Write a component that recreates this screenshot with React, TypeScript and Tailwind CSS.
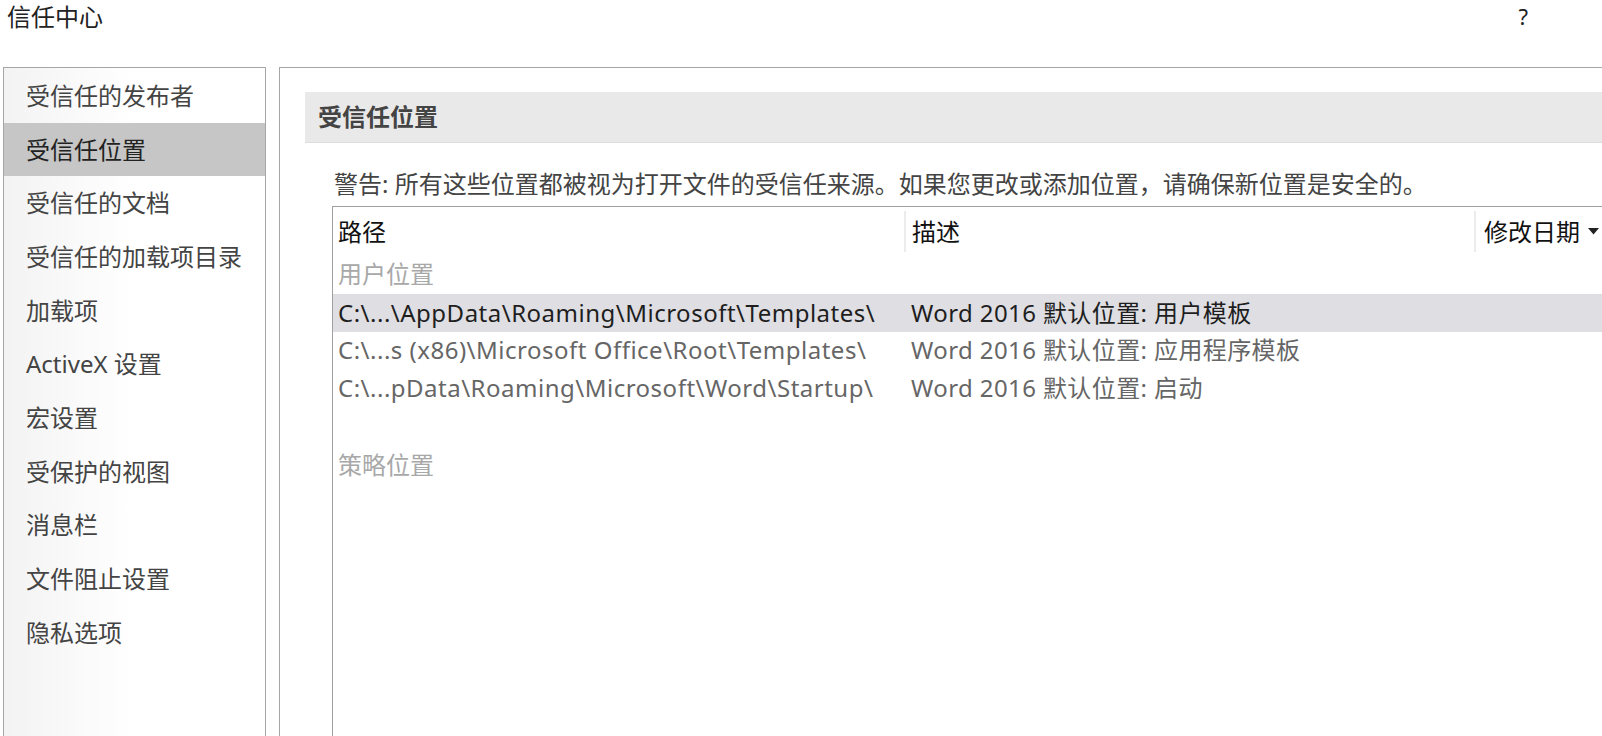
import React from 'react';

const navItems = [
  '受信任的发布者',
  '受信任位置',
  '受信任的文档',
  '受信任的加载项目录',
  '加载项',
  'ActiveX 设置',
  '宏设置',
  '受保护的视图',
  '消息栏',
  '文件阻止设置',
  '隐私选项',
];

const rows = [
  { path: 'C:\\...\\AppData\\Roaming\\Microsoft\\Templates\\', desc: 'Word 2016 默认位置: 用户模板', selected: true },
  { path: 'C:\\...s (x86)\\Microsoft Office\\Root\\Templates\\', desc: 'Word 2016 默认位置: 应用程序模板', selected: false },
  { path: 'C:\\...pData\\Roaming\\Microsoft\\Word\\Startup\\', desc: 'Word 2016 默认位置: 启动', selected: false },
];

export default function App() {
  return (
    <div className="w-[1602px] h-[736px] overflow-hidden bg-white font-['Noto_Sans','Noto_Sans_CJK_SC',sans-serif] text-[24px] text-[#444]">
      {/* title bar */}
      <div className="h-[67px] flex items-start justify-between">
        <div className="pl-[7px] pt-[0px] text-[#222] leading-[34px]">信任中心</div>
        <div className="pr-[74px] pt-[0px] text-[#222] leading-[32px] text-[22px]">?</div>
      </div>

      <div className="flex h-[669px]">
        {/* left nav */}
        <div className="ml-[3px] w-[263px] border border-b-0 border-[#a5a5a5] bg-gradient-to-r from-[#f3f3f3] via-white to-white">
          <div className="pt-[1px]">
            {navItems.map((item, i) => (
              <div
                key={item}
                className={
                  'h-[53.7px] flex items-center pl-[22px] ' +
                  (i === 1 ? 'bg-[#c6c6c6] text-[#222]' : '')
                }
              >
                {item}
              </div>
            ))}
          </div>
        </div>

        {/* right panel */}
        <div className="ml-[13px] flex-1 border-l border-t border-[#a5a5a5] pt-[24px] pl-[25px]">
          <div className="h-[51px] bg-[#e9e9e9] border-b border-[#dedede] flex items-center pl-[13px] font-semibold text-[#444]">
            受信任位置
          </div>

          <div className="pl-[29px] pt-[20px] h-[63px] leading-[42px] whitespace-nowrap">
            警告: 所有这些位置都被视为打开文件的受信任来源。如果您更改或添加位置，请确保新位置是安全的。
          </div>

          <div className="ml-[27px] border-l border-t border-[#a0a0a0] h-[600px]">
            {/* header */}
            <div className="grid grid-cols-[571px_570px_1fr] h-[46px] items-end pb-[1px] text-[#111]">
              <div className="pl-[5px] h-[41px] flex items-center">路径</div>
              <div className="pl-[6px] h-[41px] flex items-center border-l-2 border-[#ececec]">描述</div>
              <div className="pl-[8px] h-[41px] flex items-center border-l-2 border-[#ececec] whitespace-nowrap">
                修改日期
                <svg className="ml-[8px]" width="11" height="7" viewBox="0 0 11 7">
                  <path d="M0 0 L11 0 L5.5 6.5 Z" fill="#222" />
                </svg>
              </div>
            </div>

            <div className="h-[41px] flex items-center pl-[5px] text-[#a8a8a8]">用户位置</div>

            {rows.map((r) => (
              <div
                key={r.path}
                className={
                  'grid grid-cols-[571px_1fr] h-[37.5px] items-center whitespace-nowrap ' +
                  (r.selected ? 'bg-[#dedee3] text-[#1e1e1e]' : 'text-[#666]')
                }
              >
                <div className="pl-[5px] tracking-[0.5px]">{r.path}</div>
                <div className="pl-[7px] tracking-[0.4px]">{r.desc}</div>
              </div>
            ))}

            <div className="h-[38px]" />
            <div className="h-[40px] flex items-center pl-[5px] text-[#a8a8a8]">策略位置</div>
          </div>
        </div>
      </div>
    </div>
  );
}
